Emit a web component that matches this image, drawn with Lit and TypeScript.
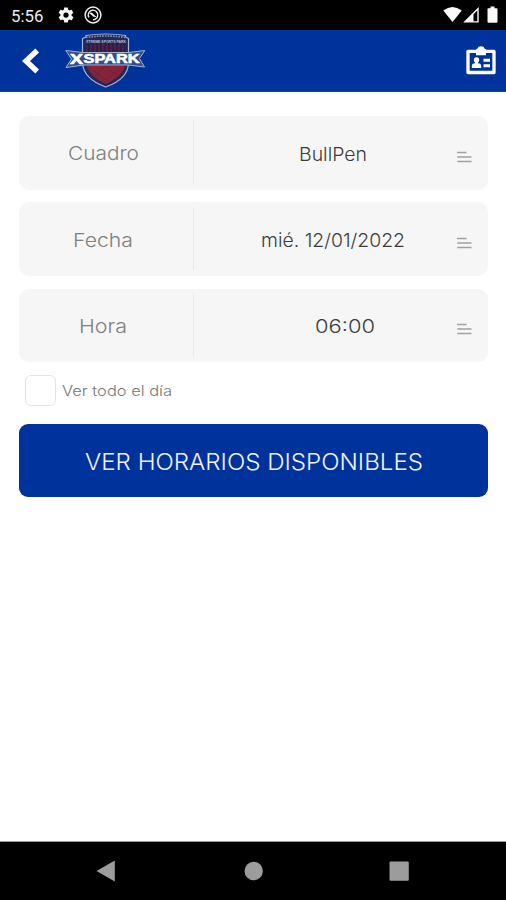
import { LitElement, html, svg, css } from "lit";
import { customElement, property } from "lit/decorators.js";

@customElement("fit-text")
class FitText extends LitElement {
  @property() text = "";
  @property({ type: Number }) width = 60;
  @property({ type: Number }) size = 19;
  static styles = css`
    :host { display: block; flex: none; }
    svg { display: block; overflow: visible; }
    text { font-family: Inter, "Liberation Sans", sans-serif; font-weight: var(--weight, 300); fill: currentColor; }
  `;
  render() {
    const cap = this.size * 0.727;
    return html`<svg width=${this.width} height=${cap}>
      ${svg`<text x="0" y=${cap} font-size=${this.size} textLength=${this.width} lengthAdjust="spacingAndGlyphs">${this.text}</text>`}
    </svg>`;
  }
}

@customElement("picker-row")
class PickerRow extends LitElement {
  @property() label = "";
  @property() value = "";
  @property({ type: Number }) labelWidth = 60;
  @property({ type: Number }) valueWidth = 60;
  static styles = css`
    :host { display: grid; grid-template-columns: 174px 1px 1fr; height: 73.6px; border-radius: 10px; background: #f6f6f6; align-items: center; }
    .label { display: flex; justify-content: center; color: #808080; padding: 1px 6px 0 0; --weight: 350; }
    .line { height: 63px; background: #e9e9e9; align-self: center; margin-bottom: 2px; }
    .value { display: grid; grid-template-columns: 1fr 16px; align-items: center; padding-right: 15px; color: #3c3c3c; }
    .center { display: flex; justify-content: center; padding: 1px 0 0 var(--indent, 14px); }
    .menu { display: block; margin-top: 8px; }
  `;
  render() {
    return html`
      <div class="label"><fit-text .text=${this.label} .width=${this.labelWidth}></fit-text></div>
      <div class="line"></div>
      <div class="value">
        <div class="center"><fit-text .text=${this.value} .width=${this.valueWidth} .size=${18.6}></fit-text></div>
        <svg class="menu" width="16" height="12" viewBox="0 0 16 12">
          <path d="M0 1.500H9.500M.3 6H14.500M.3 10.500H14.500" stroke="#a0a0a0" stroke-width="1.500" />
        </svg>
      </div>`;
  }
}

@customElement("app-root")
class AppRoot extends LitElement {
  static styles = css`
    :host { display: flex; flex-direction: column; width: 506px; height: 900px; background: #fff; overflow: hidden; }
    svg { display: block; flex: none; }
    .status { height: 30px; flex: none; background: #000; display: flex; align-items: center; padding: 0 7px 0 11px; box-sizing: border-box; }
    .clock { font: 400 16.8px/30px Roboto, sans-serif; color: #eee; width: 46px; padding-top: 2px; }
    .grow { flex: 1; }
    .bar { height: 61.5px; flex: none; background: #00329b; display: flex; align-items: center; padding: 2px 10px 0 21px; box-sizing: border-box; border-bottom: 1px solid #1c3f9c; }
    .logo { margin-left: 24px; }
    .logo text { font-family: "Liberation Sans", sans-serif; font-weight: 700; }
    .form { flex: 1; display: flex; flex-direction: column; padding: 24.5px 18px 0 19px; }
    picker-row { margin-bottom: 12.7px; }
    .late { --indent: 38px; }
    .check { display: flex; align-items: center; gap: 5.5px; height: 31px; padding-left: 6px; color: #777; --weight: 350; }
    .box { width: 31px; height: 31px; box-sizing: border-box; border: 1.5px solid #e3e3e3; border-radius: 6px; }
    .submit { height: 73.5px; margin-top: 18px; border-radius: 9px; background: #00329b; color: #f1f3ff; display: flex; justify-content: center; align-items: center; padding-top: 1px; box-sizing: border-box; --weight: 350; }
    .nav { height: 59px; flex: none; box-sizing: border-box; border-top: 1px solid #999; background: #000; display: flex; align-items: center; }
  `;
  render() {
    return html`
      <div class="status">
        <div class="clock">5:56</div>
        <svg width="18" height="18" viewBox="0 0 24 24"><path fill="#f5f5f5" d="M19.4 13c0-.3.1-.6.1-1s0-.7-.1-1l2.1-1.700c.2-.1.2-.4.1-.6l-2-3.500c-.1-.2-.4-.3-.6-.2l-2.500 1c-.5-.4-1.100-.7-1.700-1l-.4-2.600c0-.2-.2-.4-.5-.4h-4c-.2 0-.4.2-.5.4L9.200 5c-.6.300-1.200.6-1.700 1L5 5c-.2-.1-.5 0-.6.200l-2 3.500c-.1.200-.1.500.1.600L4.600 11c0 .3-.1.700-.1 1s0 .7.100 1l-2.100 1.700c-.2.100-.2.400-.1.600l2 3.500c.1.200.4.300.6.200l2.500-1c.5.400 1.100.7 1.700 1l.4 2.600c0 .2.2.4.5.4h4c.2 0 .4-.2.5-.4l.4-2.600c.6-.3 1.200-.6 1.700-1l2.500 1c.2.100.5 0 .6-.2l2-3.500c.1-.2.100-.5-.1-.600zM12 15.500a3.500 3.500 0 1 1 0-7 3.500 3.500 0 0 1 0 7z"/></svg>
        <svg width="18" height="18" viewBox="0 0 18 18" style="margin-left:9px">
          <circle cx="9" cy="9" r="7.900" fill="none" stroke="#eee" stroke-width="1.500"/>
          <circle cx="9" cy="9" r="4.700" fill="none" stroke="#eee" stroke-width="1.500" stroke-dasharray="24 5.500" transform="rotate(150 9 9)"/>
          <path d="M4.500 6.500L8 6.800L12.800 11.300L9.500 10.800z" fill="#eee"/>
        </svg>
        <div class="grow"></div>
        <svg width="56" height="18" viewBox="443 6 56 18" fill="#fafafa">
          <path d="M443.300 10.500Q452.500 3.500 461.800 10.500L452.500 22z"/>
          <path fill-rule="evenodd" d="M478.700 7V22.500H463.200zM477.300 10.500L473.500 14.300V21.200H477.300z"/>
          <path d="M490.500 6.500h4v1.800h2q1 0 1 1v12.400q0 1-1 1h-8q-1 0-1-1V9.300q0-1 1-1h2z"/>
        </svg>
      </div>

      <div class="bar">
        <svg width="20" height="26" viewBox="21 48 20 26"><path d="M37.200 50.500L26 61L37.200 71.500" fill="none" stroke="#fff" stroke-width="5.400"/></svg>
        <svg class="logo" width="80" height="56" viewBox="65 33 80 56">
          <path d="M82.500 38.500L86 37V35.500Q106 32.500 125.500 35.500V37L128.500 38.500V63Q128 79 105.800 87Q83.500 79 82.500 63z" fill="#20275a" stroke="#a9b3cc" stroke-width="1.200"/>
          <path d="M86 45Q106 41 126 45V64Q124 77 105.800 84Q87.500 77 86 64z" fill="#4e2148"/>
          <path d="M87 66H125Q121 77 105.800 84Q91 77 87 66z" fill="#8a2238"/>
          <path d="M89 44V53M93 43.500V53M97 43V53M101 43V53M105 43V53M109 43V53M113 43V53M117 43.500V53M121 44V53M124.500 44V53" stroke="#1f2147" stroke-width="1.500"/>
          <path d="M87 66L105.800 80L124.500 66M95 76L105.800 66L117 76" fill="none" stroke="#6b2140" stroke-width="1"/>
          <path d="M86 37.500Q106 34.500 126 37.500" fill="none" stroke="#7e88a8" stroke-width="1.700" stroke-dasharray="1.700 1"/>
          <text x="86" y="42.600" font-size="4" textLength="40" lengthAdjust="spacingAndGlyphs" fill="#b9c0d2">XTREME SPORTS PARK</text>
          <path d="M65.800 50.500L83 52.500H129L144.800 50.500L139.500 58.500L144.500 67L128 65H84L66 67.500L71.500 59z" fill="#344d8a" stroke="#a5b3d1" stroke-width="1"/>
          <text x="70" y="64.200" font-size="14" textLength="13" lengthAdjust="spacingAndGlyphs" fill="#fff" stroke="#fff" stroke-width=".6">X</text>
          <text x="83.500" y="62.800" font-size="12.500" textLength="56" lengthAdjust="spacingAndGlyphs" fill="#fff" stroke="#fff" stroke-width=".6">SPARK</text>
        </svg>
        <div class="grow"></div>
        <svg width="30" height="30" viewBox="466 46 30 30">
          <path d="M468 51.300H494V72.500H468z" fill="none" stroke="#fff" stroke-width="3.300" stroke-linejoin="round"/>
          <path d="M476 49.500L477.500 48.500Q478 46.300 481 46.300T484.500 48.500L486 49.500V55.200H476z" fill="#fff"/>
          <circle cx="476.500" cy="60" r="2.700" fill="#fff"/>
          <path d="M475 61h3v2.200q3.200.3 3.200 2.800v2H471.800v-2q0-2.500 3.200-2.800zM483.500 58.700h6.500v3.100h-6.500zM483.500 64.200h6.500v3.100h-6.500z" fill="#fff"/>
        </svg>
      </div>

      <div class="form">
        <picker-row label="Cuadro" value="BullPen" .labelWidth=${71} .valueWidth=${68}></picker-row>
        <picker-row label="Fecha" value="mié. 12/01/2022" .labelWidth=${60} .valueWidth=${144}></picker-row>
        <picker-row class="late" label="Hora" value="06:00" .labelWidth=${48} .valueWidth=${60}></picker-row>
        <div class="check">
          <div class="box"></div>
          <fit-text text="Ver todo el día" .width=${110} .size=${14.5}></fit-text>
        </div>
        <div class="submit"><fit-text text="VER HORARIOS DISPONIBLES" .width=${338} .size=${22.8}></fit-text></div>
      </div>

      <div class="nav">
        <svg width="506" height="58" viewBox="0 842 506 58" fill="#9c9c9c">
          <path d="M96.500 871L114.800 860.500V881.500z"/>
          <circle cx="253.700" cy="871" r="9.200"/>
          <rect x="389.500" y="861.500" width="19.300" height="19.300" rx="1.200"/>
        </svg>
      </div>`;
  }
}
